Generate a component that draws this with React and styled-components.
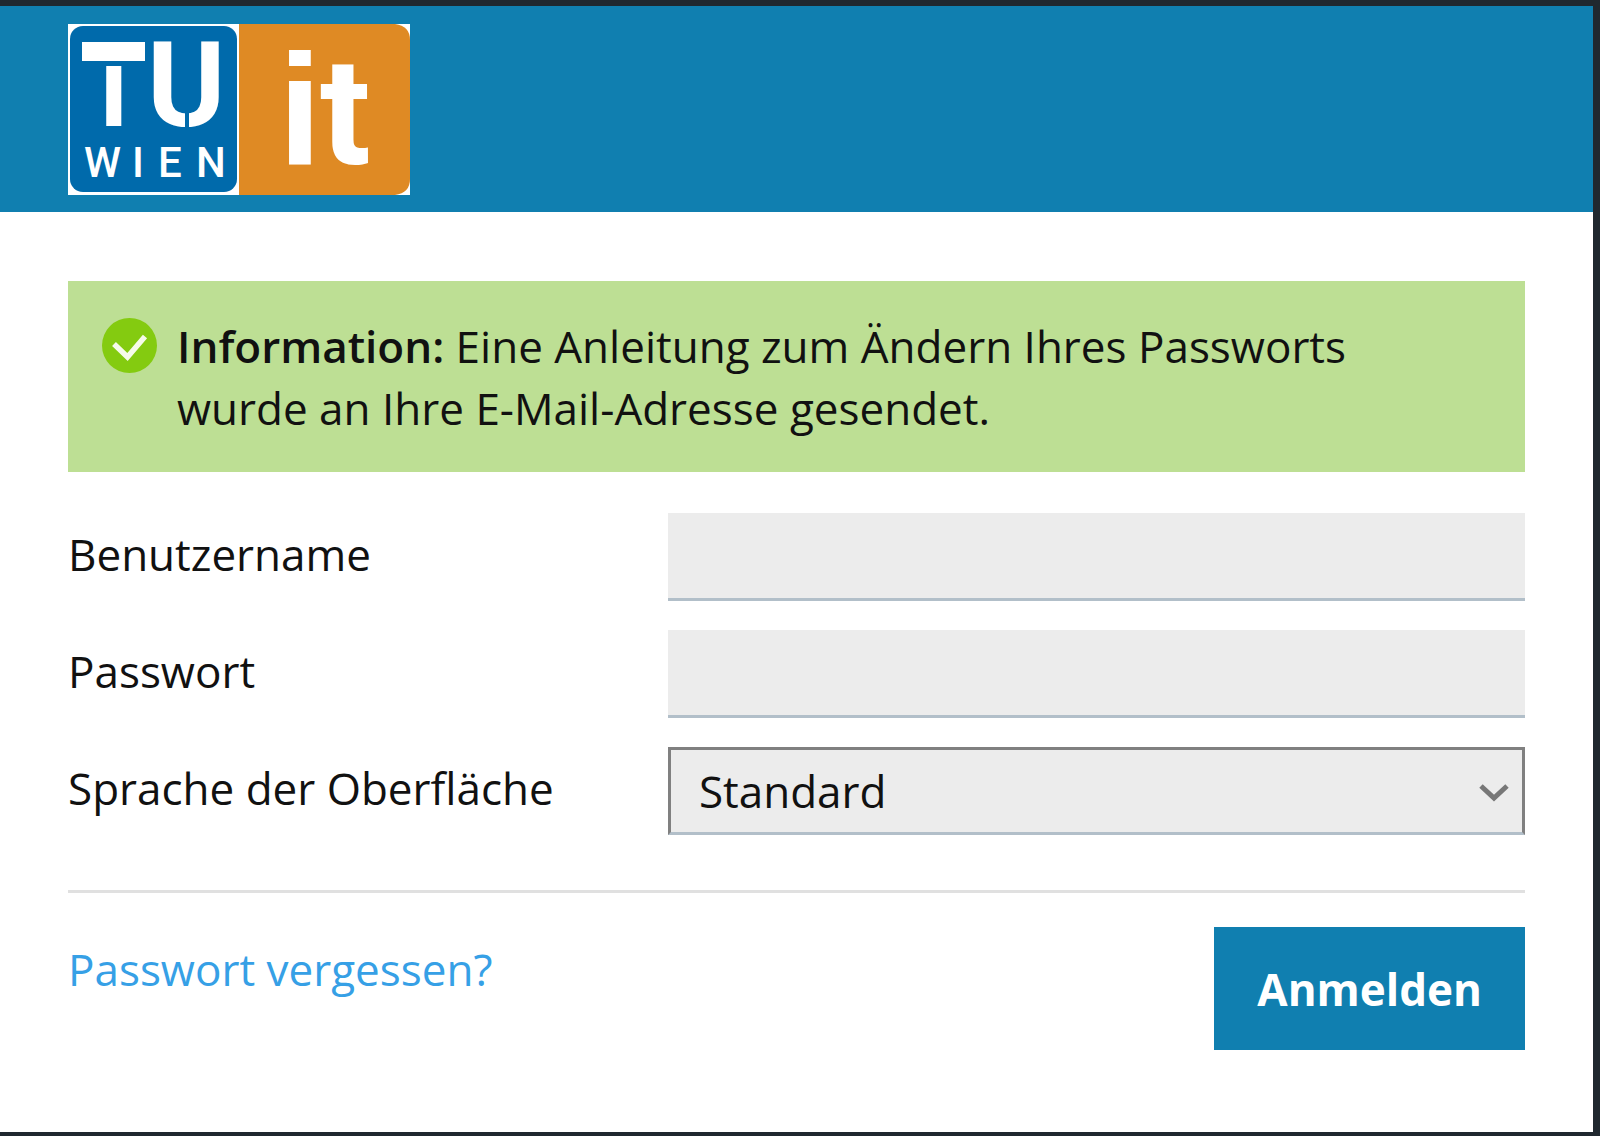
import React from "react";
import styled, { createGlobalStyle } from "styled-components";

const GlobalStyle = createGlobalStyle`
  *, *::before, *::after { box-sizing: border-box; }
  body {
    margin: 0;
    background: #20282f;
    color: #111;
    font-family: "Open Sans", "Noto Sans", sans-serif;
    font-size: 44px;
    line-height: 62px;
  }
`;

const Page = styled.div`
  display: flex;
  flex-direction: column;
  min-height: 100vh;
  padding: 6px 7px 4px 0;
`;

const Header = styled.header`
  padding: 18px 68px 17px;
  background: #107fb0;
`;

const LogoImage = styled.svg`
  display: block;
  width: 342px;
  height: 171px;
  overflow: visible;
`;

const Main = styled.main`
  flex: 1;
  padding: 69px 68px 80px;
  background: #fff;
`;

const Notice = styled.div`
  display: flex;
  align-items: flex-start;
  gap: 20px;
  padding: 34px 68px 33px 34px;
  background: #bddf94;
`;

const NoticeIcon = styled.svg`
  flex: none;
  width: 55px;
  height: 55px;
  margin-top: 3px;
`;

const NoticeText = styled.p`
  margin: 0;

  strong { font-weight: 600; }
`;

const Fields = styled.div`
  display: grid;
  gap: 29px;
  margin-top: 41px;
`;

const Field = styled.div`
  display: grid;
  grid-template-columns: 7fr 10fr;
`;

const Label = styled.label`
  padding-top: 10px;
`;

const TextInput = styled.input`
  width: 100%;
  height: 88px;
  padding: 0 28px;
  border: 0;
  border-bottom: 3px solid #b2bfc9;
  border-radius: 0;
  background: #ececec;
  color: inherit;
  font: inherit;
`;

const SelectBox = styled.div`
  position: relative;
`;

const Select = styled(TextInput)`
  display: block;
  appearance: none;
  border: 3px solid #808080;
  border-bottom-color: #b2bfc9;
`;

const Chevron = styled.svg`
  position: absolute;
  top: 36px;
  right: 14px;
  width: 34px;
  height: 20px;
  pointer-events: none;
`;

const Actions = styled.div`
  display: flex;
  justify-content: space-between;
  align-items: flex-start;
  margin-top: 55px;
  padding-top: 34px;
  border-top: 3px solid #e0e0e0;
`;

const ForgotLink = styled.a`
  padding-top: 11px;
  color: #36a0e6;
  text-decoration: none;
`;

const SubmitButton = styled.button`
  height: 123px;
  padding: 0 43px;
  border: 0;
  background: #107fb0;
  color: #fff;
  font: inherit;
  font-weight: 700;
`;

function Logo() {
  return (
    <LogoImage viewBox="0 0 342 171" role="img" aria-label="TU Wien it">
      <rect width="342" height="171" fill="#fff" />
      <rect x="2" y="2" width="167" height="166" rx="13" fill="#006aab" />
      <path d="M171 0H327Q342 2 342 16V155Q342 169 327 171H171Z" fill="#df8a24" />
      <g fill="#fff" fontFamily='"Liberation Sans", Arial, sans-serif' fontWeight="700">
        <text x="14" y="102" fontSize="104">T</text>
        <text x="210" y="140" fontSize="158">i</text>
      </g>
      <g fill="#fff" fontFamily="Roboto, sans-serif" fontWeight="700">
        <text x="79" y="102" fontSize="119">U</text>
        <text x="252" y="140" fontSize="150">t</text>
      </g>
      <rect x="14" y="18" width="63" height="19" fill="#fff" />
      <g fill="#006aab">
        <rect x="12" y="37" width="66" height="5" />
        <rect x="117" y="80" width="4" height="26" />
      </g>
      <text
        x="16 64 90 128"
        y="153"
        fill="#fff"
        fontFamily="Roboto, sans-serif"
        fontSize="42"
        fontWeight="500"
      >
        WIEN
      </text>
    </LogoImage>
  );
}

export default function App() {
  return (
    <>
      <GlobalStyle />
      <Page>
        <Header>
          <Logo />
        </Header>
        <Main>
          <Notice role="status">
            <NoticeIcon viewBox="0 0 55 55" aria-hidden="true">
              <circle cx="27.5" cy="27.5" r="27.5" fill="#84cb10" />
              <path
                d="M12 26L25.500 39L43 18.500"
                fill="none"
                stroke="#f6fbe9"
                strokeWidth="5.500"
              />
            </NoticeIcon>
            <NoticeText>
              <strong>Information:</strong> Eine Anleitung zum Ändern Ihres Passworts
              wurde an Ihre E-Mail-Adresse gesendet.
            </NoticeText>
          </Notice>
          <form onSubmit={(event) => event.preventDefault()}>
            <Fields>
              <Field>
                <Label htmlFor="username">Benutzername</Label>
                <TextInput id="username" type="text" autoComplete="username" />
              </Field>
              <Field>
                <Label htmlFor="password">Passwort</Label>
                <TextInput id="password" type="password" autoComplete="current-password" />
              </Field>
              <Field>
                <Label htmlFor="language">Sprache der Oberfläche</Label>
                <SelectBox>
                  <Select as="select" id="language" defaultValue="default">
                    <option value="default">Standard</option>
                  </Select>
                  <Chevron viewBox="0 0 34 20" aria-hidden="true">
                    <path d="M4 3L17 15L30 3" fill="none" stroke="#777" strokeWidth="5" />
                  </Chevron>
                </SelectBox>
              </Field>
            </Fields>
            <Actions>
              <ForgotLink href="#passwort">Passwort vergessen?</ForgotLink>
              <SubmitButton type="submit">Anmelden</SubmitButton>
            </Actions>
          </form>
        </Main>
      </Page>
    </>
  );
}
